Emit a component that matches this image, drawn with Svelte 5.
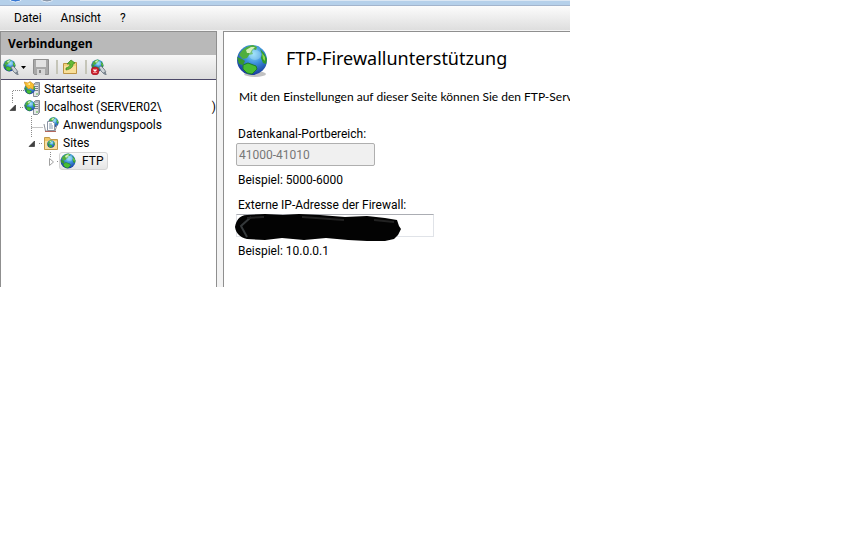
<script lang="ts">
	type TreeNode = { label: string; tail?: string; icon: string; depth: number; open?: boolean; link: string };

	const menu = ['Datei', 'Ansicht', '?'];

	const nodes: TreeNode[] = [
		{ label: 'Startseite', icon: 'start', depth: 0, link: 'M4.5 18V10.5H16' },
		{ label: 'localhost (SERVER02\\', tail: ')', icon: 'server', depth: 0, open: true, link: 'M4.5 0v5M12 9.5h4' },
		{ label: 'Anwendungspools', icon: 'pools', depth: 1, link: 'M4.5 0V18M4.5 11.5H16' },
		{ label: 'Sites', icon: 'sites', depth: 1, open: true, link: 'M4.5 0v4M12 9.5h4' },
		{ label: 'FTP', icon: 'globe', depth: 2, open: false, link: 'M6.5 0v5M13 9.5h3' }
	];

	let selected = $state('FTP');
	let portRange = $state('41000-41010');
	let externalIp = $state('');
</script>

{#snippet earth()}
	<circle cx="16" cy="16" r="15" fill="url(#sea)" />
	<path d="M3 11C6 5 11 2 17 1l4 2-1 3-3-1-1 3 1 2-4 1-2 3-4 1-2-2z" fill="#4fae3e" />
	<path d="M10 6l5-3 4 0-3 3-2 3-3 0z" fill="#d3efb9" />
	<path d="M1 13l5 2 3 2-2 4-4-1z" fill="#37982d" />
	<path d="M7 21l5-2 8 3 1 3-5 5-5-1-4-4z" fill="#49bd32" stroke="#1d7d2c" />
	<path d="M24 5l4 4 3 6-1 5-3-1-2-5 1-4z" fill="#2f9a2d" />
	<path d="M26 9l3 4 0 4-2-2z" fill="#8bd850" />
	<ellipse cx="19" cy="11" rx="6" ry="5" fill="#c9f2ff" opacity=".3" />
{/snippet}

{#snippet server()}
	<path d="M9.5 3.5l2-2h4v12l-2 2h-4z" fill="#aeb4ba" stroke="#858c94" />
	<path d="M10 4h4v11h-4z" fill="#e4e7e9" />
	<path d="M10 5.5h4M10 7.5h4M10 9.5h4" stroke="#7b828a" />
	<path d="M12 13h2" stroke="#55b544" />
{/snippet}

{#snippet icon(name: string)}
	<svg class="icon" viewBox="0 0 16 16" aria-hidden="true">
		{#if name === 'globe'}
			<g transform="scale(.5)">{@render earth()}</g>
		{:else if name === 'start'}
			{@render server()}
			<g transform="translate(0 2) scale(.36)">{@render earth()}</g>
			<path d="M0 1l4 1 2-1.5 4 3-1 5-2.5-1.5-2 1L2 5z" fill="#f8bf32" stroke="#c98a1d" stroke-width=".6" />
			<path d="M3 3l3-1 0 2z" fill="#fff3b0" />
		{:else if name === 'server'}
			{@render server()}
			<g transform="translate(0 1) scale(.36)">{@render earth()}</g>
		{:else if name === 'pools'}
			<g transform="translate(5 0) scale(.34)">{@render earth()}</g>
			<path d="M4.5 4.5h5l2 2v7h-7z" fill="#fff" stroke="#8a94a5" />
			<path d="M6 7h3M6 9h4M6 11h4" stroke="#8597ad" />
			<path d="M1 7l1.5 7H12l2-6" fill="none" stroke="#8c9199" />
			<path d="M2 14.5h11" stroke="#b3685e" />
		{:else if name === 'sites'}
			<path d="M1.5 14.5v-12h5l1 2h7v10z" fill="#f0c665" stroke="#c09a4c" />
			<path d="M2 6h12v8H2z" fill="#f9dfa0" />
			<g transform="translate(4 5) scale(.25)">{@render earth()}</g>
		{:else if name === 'connect' || name === 'disconnect'}
			<g transform="scale(.4)">{@render earth()}</g>
			<path d="M8 8l2-1 3 3 2 3-2 2-3-3z" fill="#cdd3d8" stroke="#67727e" stroke-width=".8" />
			<path d="M13 13l2 3" stroke="#7b858f" stroke-width="2" />
			{#if name === 'disconnect'}
				<circle cx="4" cy="12" r="4" fill="#cf2330" stroke="#9a1622" stroke-width=".6" />
				<path d="M2.5 10.5l3 3M5.5 10.5l-3 3" stroke="#fff" stroke-width="1.4" />
			{/if}
		{:else if name === 'save'}
			<path d="M.5.5h15v15h-14l-1-1z" fill="#a8a8a8" stroke="#8e8e8e" />
			<path d="M3 1h10v7H3z" fill="#e2e2e2" />
			<path d="M4 10h8v6H4z" fill="#d5d5d5" />
			<path d="M6 11h2v3H6z" fill="#858585" />
		{:else if name === 'up'}
			<path d="M1.5 14.5v-10h5l1-1h7v11z" fill="#f3d27b" stroke="#bd9545" />
			<path d="M2 7h12v7H2z" fill="#f9df98" />
			<path d="M4 9c3-1 4-2 4-4H5l4-4 4 3-2 1c0 3-2 5-7 6z" fill="#65bb35" stroke="#398321" stroke-width=".7" />
		{/if}
	</svg>
{/snippet}

<svg class="defs" aria-hidden="true">
	<radialGradient id="sea" cx=".55" cy=".3" r=".7">
		<stop offset="0" stop-color="#91ddf8" />
		<stop offset=".45" stop-color="#3d91dc" />
		<stop offset="1" stop-color="#183a9b" />
	</radialGradient>
</svg>

<div class="window">
	<div class="titlebar">
		<svg viewBox="0 0 80 5" aria-hidden="true">
			<circle cx="15.5" cy="-8" r="10" fill="#3778d3" stroke="#e6effa" />
			<circle cx="47" cy="-8" r="10" fill="#8b98aa" stroke="#e6effa" />
		</svg>
		<span></span>
	</div>

	<nav class="menu">
		{#each menu as item}
			<button>{item}</button>
		{/each}
	</nav>

	<div class="panes">
		<aside>
			<h2>Verbindungen</h2>
			<div class="toolbar">
				<button class="drop" aria-label="Verbinden">
					{@render icon('connect')}
					<svg class="caret" viewBox="0 0 5 3" aria-hidden="true"><path d="M0 0h5L2.5 3z" /></svg>
				</button>
				<button aria-label="Speichern" disabled>{@render icon('save')}</button>
				<i></i>
				<button aria-label="Nach oben">{@render icon('up')}</button>
				<i></i>
				<button aria-label="Trennen">{@render icon('disconnect')}</button>
			</div>

			<ul class="tree">
				{#each nodes as node}
					<li class="depth-{node.depth}">
						<svg class="link" viewBox="0 0 16 18" aria-hidden="true">
							<path d={node.link} fill="none" stroke="#8c8c8c" stroke-dasharray="1 1" />
							{#if node.open === true}
								<path d="M7.5 7v5.5H2z" fill="#404040" stroke="#222" stroke-width=".6" />
							{:else if node.open === false}
								<path d="M5.5 6.5v7l4-3.5z" fill="#fff" stroke="#a0a0a0" />
							{/if}
						</svg>
						<button class:selected={selected === node.label} onclick={() => (selected = node.label)}>
							{@render icon(node.icon)}
							<span>{node.label}</span>
							{#if node.tail}<span class="tail">{node.tail}</span>{/if}
						</button>
					</li>
				{/each}
			</ul>
		</aside>

		<div class="splitter"></div>

		<main>
			<header>
				<svg viewBox="0 0 32 34" aria-hidden="true">
					<ellipse cx="19" cy="30" rx="11" ry="3" fill="#c2c2c2" />
					{@render earth()}
				</svg>
				<h1>FTP-Firewallunterstützung</h1>
			</header>
			<p class="intro">Mit den Einstellungen auf dieser Seite können Sie den FTP-Serv</p>

			<form>
				<label for="ports">Datenkanal-Portbereich:</label>
				<input id="ports" class="ports" bind:value={portRange} disabled />
				<p>Beispiel: 5000-6000</p>

				<label for="ip">Externe IP-Adresse der Firewall:</label>
				<div class="masked">
					<input id="ip" bind:value={externalIp} />
					<svg viewBox="0 0 168 30" aria-hidden="true">
						<path
							d="M1 14C2 7 6 2 13 2L31 1 49 2 65 1 86 2 111 4 133 3 151 5 163 7 165 13 167 16 164 22 160 26 151 28 133 28 114 27 92 25 70 27 48 25 31 27 13 26C7 25 2 21 1 14z"
							fill="#030303"
						/>
						<path d="M17 4L7 13l6 11" fill="none" stroke="#34383a" stroke-width="2" />
						<path d="M13 5L30 4M68 4L110 7M140 7L160 9" fill="none" stroke="#222" stroke-width="2" />
					</svg>
				</div>
				<p>Beispiel: 10.0.0.1</p>
			</form>
		</main>
	</div>
</div>

<style>
	:global(body) { background: #fff; }

	.window {
		width: 66vw;
		overflow: hidden;
		font: 12px/18px 'Segoe UI', Roboto, 'Noto Sans', sans-serif;
		color: #000;
		background: #f0f0f0;
	}
	h1, h2, p, ul { margin: 0; padding: 0; }
	button {
		font: inherit; color: inherit;
		padding: 0; border: 0; background: none;
	}
	svg { display: block; flex: none; }
	.defs { position: absolute; width: 0; height: 0; }
	.icon { width: 16px; height: 16px; }

	.titlebar {
		display: flex; height: 5px;
		background: #b5d0ea; border-bottom: 1px solid #a3b4cc;
	}
	.titlebar svg { width: 80px; height: 5px; }
	.titlebar span { flex: 1; height: 1px; background: #dbe7f4; }

	.menu {
		display: flex; gap: 19px;
		height: 24px; padding: 0 14px;
		background: linear-gradient(#fcfcfc, #dedede);
		border-bottom: 1px solid #f5f5f5;
	}

	.panes {
		display: grid;
		grid-template-columns: 217px 6px minmax(0, 1fr);
	}
	aside {
		box-sizing: border-box;
		border: 1px solid #8f8f8f; border-bottom: 0;
		background: #fff;
		overflow: hidden;
	}
	h2 {
		padding: 0 7px;
		font: 700 12px/23px 'Segoe UI', 'Open Sans', sans-serif;
		background: #b9b9b9;
	}
	.toolbar {
		display: flex; align-items: center;
		height: 24px; padding: 0 2px;
		background: linear-gradient(#f7f7f7, #dcdcdc);
		border-bottom: 1px solid #4c4868;
	}
	.toolbar .drop { display: flex; align-items: center; gap: 2px; margin-right: 7px; }
	.toolbar i {
		width: 2px; height: 14px; margin: 0 4px 0 7px;
		background: #c5c5b8;
	}
	.caret { width: 5px; height: 3px; }

	.tree { list-style: none; }
	.tree li { display: flex; height: 18px; padding-left: 7px; }
	.tree .depth-1 { padding-left: 26px; }
	.tree .depth-2 { padding-left: 43px; }
	.link { width: 16px; height: 18px; }
	.tree button {
		display: flex; align-items: center; gap: 4px;
		white-space: nowrap;
	}
	.tree li button:has(.tail) { flex: 1; }
	.tail { margin-left: auto; }
	.tree .selected {
		gap: 6px; margin-left: -1px; padding: 0 4px 0 0;
		background: linear-gradient(#fafafa, #e6e6e6);
		border: 1px solid #d5d5d5; border-radius: 3px;
	}

	.splitter { background: #f3f3f3; border-top: 1px solid #f3f3f3; }

	main {
		border: solid #8f8f8f; border-width: 1px 0 0 1px;
		padding: 12px 0 27px 12px;
		background: #fff;
		overflow: hidden;
	}
	header { display: flex; gap: 18px; }
	header svg { width: 32px; height: 34px; }
	h1 { font: 400 18px/28px 'Segoe UI', 'Noto Sans', sans-serif; white-space: nowrap; }
	.intro {
		margin: 10px 0 19px 3px;
		font-family: 'Segoe UI', Lato, sans-serif;
		white-space: nowrap;
	}

	label, form p { display: block; margin-left: 2px; }
	form p { margin-top: 5px; }
	form p + label { margin-top: 7px; }
	input {
		display: block; box-sizing: border-box;
		width: 198px; height: 23px; padding: 0 2px;
		font: inherit; color: #000;
		background: #fff; border: 1px solid #e0e3e8; border-top-color: #abadb3;
	}
	input.ports { width: 139px; color: #777; background: #f0f0f0; border: 1px solid #afafaf; border-radius: 2px; }
	.masked { position: relative; }
	.masked svg { position: absolute; left: -2px; top: -1px; width: 168px; height: 30px; }
</style>
